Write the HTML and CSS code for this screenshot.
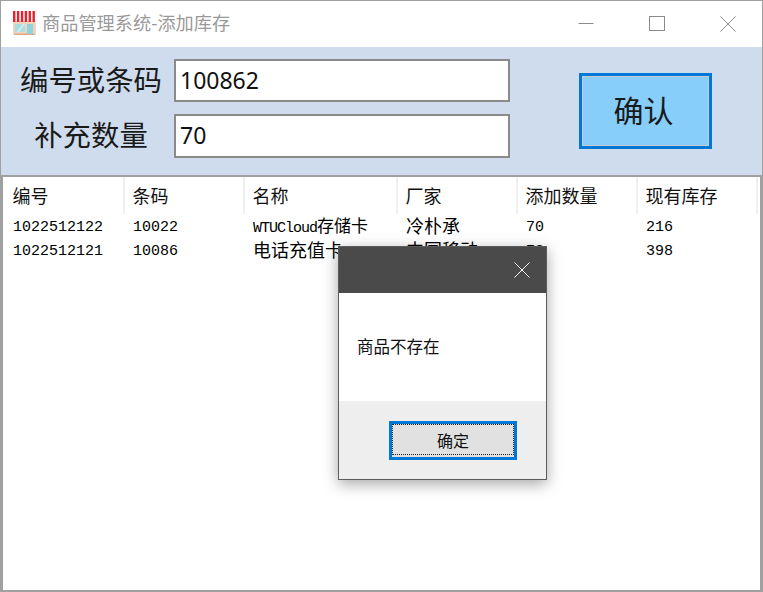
FILE: index.html
```html
<!DOCTYPE html>
<html lang="zh-CN">
<head>
<meta charset="utf-8">
<title>商品管理系统-添加库存</title>
<link rel="stylesheet" href="styles.css">
</head>
<body>
<div class="window">
  <header class="titlebar">
    <svg class="app-icon" width="24" height="25" viewBox="0 0 24 25">
      <rect x="1" y="11" width="23" height="14" rx="2" fill="#f2d3bb"/>
      <rect x="2" y="23.5" width="21" height="1.5" fill="#d9a98c"/>
      <g fill="#e8212e">
        <rect x="1" y="1" width="2.4" height="11"/><rect x="4.9" y="1" width="2.4" height="11"/>
        <rect x="8.8" y="1" width="2.4" height="11"/><rect x="12.7" y="1" width="2.4" height="11"/>
        <rect x="16.6" y="1" width="2.4" height="11"/><rect x="20.5" y="1" width="2.4" height="11"/>
      </g>
      <rect x="3" y="14" width="10" height="8" fill="#a9dfe3"/>
      <path d="M5 22l6-8h2l-6 8z" fill="#d8f2f3"/>
      <rect x="15" y="14" width="6" height="10" fill="#8fd3dc"/>
    </svg>
    <span class="title">商品管理系统-添加库存</span>
    <div class="controls">
      <svg width="16" height="16" viewBox="0 0 16 16"><path d="M0.5 7.5h15" stroke="#8a8a8a" fill="none"/></svg>
      <svg width="16" height="16" viewBox="0 0 16 16"><rect x="0.5" y="0.5" width="15" height="14" stroke="#8a8a8a" fill="none"/></svg>
      <svg width="16" height="16" viewBox="0 0 16 16"><path d="M0.5 0.5l15 15M15.5 0.5l-15 15" stroke="#8a8a8a" fill="none"/></svg>
    </div>
  </header>

  <section class="panel">
    <div class="form">
      <label class="label">编号或条码</label>
      <div class="input">100862</div>
      <label class="label">补充数量</label>
      <div class="input">70</div>
    </div>
    <button class="confirm">确认</button>
  </section>

  <section class="list">
    <div class="row head">
      <div class="cell">编号</div><div class="cell">条码</div><div class="cell wide">名称</div>
      <div class="cell">厂家</div><div class="cell">添加数量</div><div class="cell">现有库存</div>
    </div>
    <div class="row item">
      <div class="cell">1022512122</div><div class="cell">10022</div><div class="cell wide"><span class="latin">WTUCloud</span><span class="mid">存储卡</span></div>
      <div class="cell cjk">冷朴承</div><div class="cell">70</div><div class="cell">216</div>
    </div>
    <div class="row item">
      <div class="cell">1022512121</div><div class="cell">10086</div><div class="cell wide cjk">电话充值卡</div>
      <div class="cell cjk">中国移动</div><div class="cell">70</div><div class="cell">398</div>
    </div>
  </section>

  <div class="dialog">
    <div class="dialog-title">
      <svg width="16" height="16" viewBox="0 0 16 16"><path d="M0.5 0.5l15 15M15.5 0.5l-15 15" stroke="#fff" fill="none"/></svg>
    </div>
    <div class="dialog-body">商品不存在</div>
    <div class="dialog-foot"><button class="ok"><span class="ok-inner">确定</span></button></div>
  </div>
</div>
</body>
</html>
```
FILE: styles.css
```css
* { box-sizing: border-box; }
html, body { margin: 0; padding: 0; }
body { width: 763px; height: 592px; overflow: hidden; background: #fff; font-family: "Noto Sans CJK SC", sans-serif; }
.window { position: relative; width: 763px; height: 592px; border: 1px solid #a0a0a0; border-bottom: 0; display: flex; flex-direction: column; }
.titlebar { height: 46px; flex: none; display: flex; align-items: flex-start; padding: 9px 0 0 11px; background: #fff; }
.app-icon { flex: none; }
.title { margin: -11px 0 0 6px; font-size: 18.2px; line-height: 46px; color: #999; white-space: nowrap; }
.controls { margin-left: auto; display: flex; gap: 55px; padding: 6px 26px 0 0; }
.panel { height: 128px; flex: none; background: #cfdcee; display: flex; position: relative; padding: 12px 50px 0 0; justify-content: space-between; }
.form { display: grid; grid-template-columns: 173px 336px; grid-template-rows: 43px 44px; row-gap: 12px; align-content: start; }
.label { font-size: 28.4px; line-height: 39px; text-align: center; color: #1a1a1a; padding-left: 7px; white-space: nowrap; }
.input { border: 2px solid #8a8a8a; background: #fff; font-family: "Noto Sans", sans-serif; font-size: 23px; line-height: 39px; padding-left: 4px; color: #111; }
.confirm { width: 133px; height: 76px; margin-top: 14px; border: 3px solid #0078d7; outline: 1px solid #c8ccd2; outline-offset: -4px; background: #87cefa; font-family: inherit; font-size: 30px; color: #1a1a1a; padding: 0 4px 5px 0; }
.list { flex: 1; border: 2px solid #a0a0a0; background: #fff; }
.row { display: flex; padding-left: 2px; }
.head { height: 37px; margin-bottom: 2px; font-size: 18px; line-height: 37px; color: #111; }
.head .cell { border-right: 2px solid #f0f0f0; padding-left: 7.5px; }
.item { height: 24px; font-family: "Liberation Mono", "Noto Sans CJK SC", monospace; font-size: 15px; line-height: 24px; color: #000; }
.cell { width: 120px; padding-left: 8px; white-space: nowrap; flex: none; }
.cell.wide { width: 153px; }
.cjk { font-size: 18px; }
.latin { letter-spacing: -1px; }
.mid { font-size: 17px; }
.dialog { position: absolute; left: 337px; top: 245px; width: 209px; height: 234px; border: 1px solid #5c5c5c; background: #fff; box-shadow: 0 4px 14px rgba(0,0,0,.35); display: flex; flex-direction: column; }
.dialog-title { height: 46px; flex: none; background: #4a4a4a; display: flex; align-items: center; justify-content: flex-end; padding-right: 16px; }
.dialog-body { flex: 1; padding: 42px 0 0 18px; font-size: 16.5px; line-height: 22px; color: #111; }
.dialog-foot { height: 78px; flex: none; background: #eeeeee; display: flex; justify-content: flex-end; padding: 20px 29px 0 0; }
.ok { width: 128px; height: 39px; padding: 0 0 2px; border: 3px solid #0078d7; background: #e1e1e1; font-family: inherit; font-size: 16px; color: #111; }
.ok-inner { display: flex; align-items: center; justify-content: center; height: 100%; border: 1px dotted #222; }
```
